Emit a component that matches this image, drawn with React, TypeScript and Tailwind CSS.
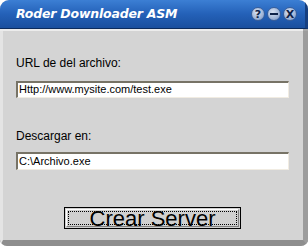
import React from "react";

function CapButton({ children }: { children: React.ReactNode }) {
  return (
    <div className="w-[14px] h-[14px] rounded-full bg-[radial-gradient(circle_at_40%_35%,#d8e2f2,#9fb4d6_60%,#7391c0)] border border-[#3a5f9a] flex items-center justify-center text-[#0e2248] text-[11px] font-bold leading-none font-['DejaVu_Sans',sans-serif]">
      {children}
    </div>
  );
}

export default function App() {
  return (
    <div className="w-[308px] h-[246px] bg-white">
      <div className="flex flex-col h-full rounded-t-[9px] rounded-b-[7px] overflow-hidden bg-[#d4d4d4] font-['Liberation_Sans',Arial,sans-serif]">
        {/* title bar */}
        <div className="h-[29px] shrink-0 flex items-center pl-4 pr-[8px] bg-gradient-to-b from-[#3c7fd4] via-[#2461b8] to-[#1a4f9e] border-b border-[#0c2b5c] border-r-[3px] border-r-[#163f80]">
          <span className="text-white text-[12.5px] font-bold italic font-['DejaVu_Sans',Verdana,sans-serif] tracking-[-0.2px]">
            Roder Downloader ASM
          </span>
          <div className="ml-auto flex items-center gap-[2px]">
            <CapButton>?</CapButton>
            <CapButton>
              <span className="block w-[8px] h-[2px] bg-[#0e2248]" />
            </CapButton>
            <CapButton>X</CapButton>
          </div>
        </div>
        <div className="h-[2px] shrink-0 bg-[#ececec] border-r-[5px] border-r-[#a8a8a8]" />

        {/* body */}
        <div className="flex-1 flex flex-col border-l-[3px] border-l-[#e4e4e4] border-r-[5px] border-r-[#9c9c9c] border-b-[6px] border-b-[#8e8e8e] pl-[13px] text-[12px] text-black">
          <div className="mt-[25px] h-[14px] leading-[14px]">URL de del archivo:</div>
          <div className="mt-[11px] w-[273px] h-[17px] bg-white border-t-2 border-l-2 border-t-[#777366] border-l-[#777366] border-b border-r border-b-[#f1ece2] border-r-[#f1ece2] text-[11px] leading-[13px] pl-[1px]">
            Http://www.mysite.com/test.exe
          </div>
          <div className="mt-[31px] h-[14px] leading-[14px]">Descargar en:</div>
          <div className="mt-[9px] w-[273px] h-[18px] bg-white border-t-2 border-l-2 border-t-[#777366] border-l-[#777366] border-b border-r border-b-[#f1ece2] border-r-[#f1ece2] text-[11px] leading-[14px] pl-[1px]">
            C:\Archivo.exe
          </div>
          <div className="mt-[37px] ml-[48px] w-[177px] h-[22px] border border-black bg-[#d0d0d0] p-[1px]">
            <div className="h-full border-t border-l border-t-white border-l-white border-b border-r border-b-[#808080] border-r-[#808080] p-[1px]">
              <div className="h-full border border-dotted border-black flex items-center justify-center text-[22px] leading-none pt-[2px]">
                Crear Server
              </div>
            </div>
          </div>
        </div>
      </div>
    </div>
  );
}
